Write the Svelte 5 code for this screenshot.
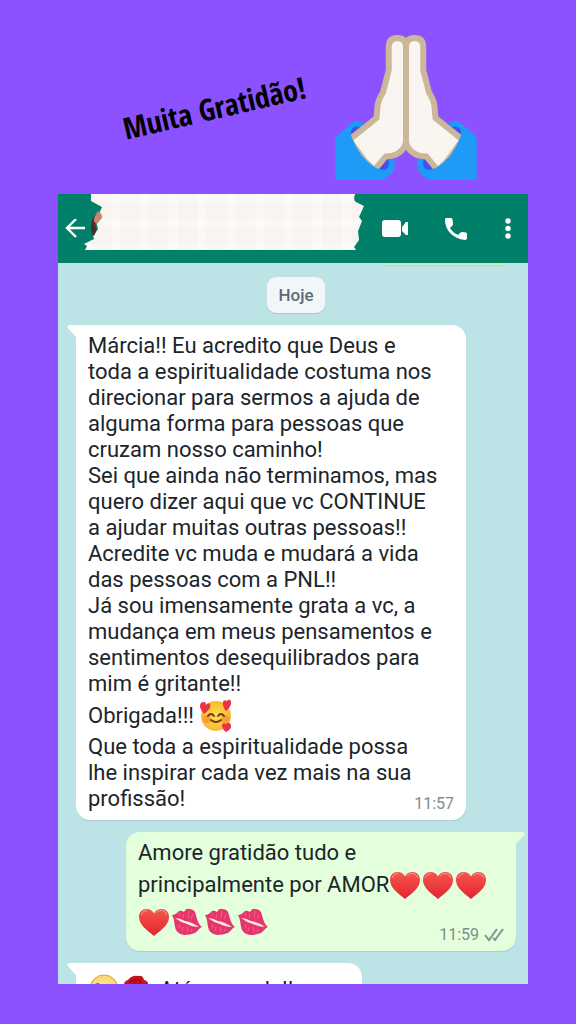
<script>
  const messages = [
    {
      from: "them",
      size: "full",
      time: "11:57",
      parts: [
        {
          text: "Márcia!! Eu acredito que Deus e\ntoda a espiritualidade costuma nos\ndirecionar para sermos a ajuda de\nalguma forma para pessoas que\ncruzam nosso caminho!\nSei que ainda não terminamos, mas\nquero dizer aqui que vc CONTINUE\na ajudar muitas outras pessoas!!\nAcredite vc muda e mudará a vida\ndas pessoas com a PNL!!\nJá sou imensamente grata a vc, a\nmudança em meus pensamentos e\nsentimentos desequilibrados para\nmim é gritante!!\nObrigada!!! ",
        },
        { icon: "loved" },
        {
          text: "\nQue toda a espiritualidade possa\nlhe inspirar cada vez mais na sua\nprofissão!",
        },
      ],
    },
    {
      from: "me",
      size: "full",
      time: "11:59",
      parts: [
        { text: "Amore gratidão tudo e\nprincipalmente por AMOR" },
        { icon: "heart" },
        { icon: "heart" },
        { icon: "heart" },
        { text: "\n" },
        { icon: "heart" },
        { icon: "kiss" },
        { icon: "kiss" },
        { icon: "kiss" },
      ],
    },
    {
      from: "them",
      size: "short",
      parts: [{ icon: "wink" }, { icon: "rose" }, { text: " Até segunda!!" }],
    },
  ];
</script>

{#snippet emoji(name)}
  <svg class="emoji" viewBox="0 0 33 37" aria-hidden="true">
    {#if name === "heart"}
      <path fill="url(#heartFill)" d="M16 33C9 27 1 22 1 14C1 9 4 6 8.500 6C12 6 15 8 16 10.500C17 8 20 6 23.500 6C28 6 31 9 31 14C31 22 23 27 16 33Z" />
      <path fill="none" stroke="#f9a596" stroke-width="1" opacity=".8" d="M3 12Q5 7 9 7.500M18 10Q20 7 24 7.500Q28 8 29 12" />
    {:else if name === "kiss"}
      <path fill="#e5356c" d="M1 12C4 12 6 10 8 8Q10 7 13 9Q15 5 18 6Q22 6 24 9C26 14 26 20 31 24C28 25 27 28 24 30Q19 32 13 32Q7 31 5 27C3 22 4 17 1 12Z" />
      <path fill="#fbe9dc" d="M4 15Q9 15 14 18Q21 19 28 24Q21 24 16 21Q9 19 4 15Z" />
      <path fill="none" stroke="#f2769c" stroke-width="1" opacity=".7" d="M8 10L9 13M13 11L12 15M18 8L17 15M22 11L20 16M8 21L9 25M12 24L11 28M16 24L17 29M21 26L20 29" />
    {:else if name === "loved"}
      <circle cx="17" cy="19" r="15" fill="url(#faceFill)" />
      <circle cx="8" cy="22" r="4" fill="#f78b3c" opacity=".7" />
      <circle cx="26" cy="22" r="4" fill="#f78b3c" opacity=".7" />
      <path fill="none" stroke="#6b3d12" stroke-width="2" stroke-linecap="round" d="M9 19Q12 15 15 19M19 19Q22 15 25 19M12 23Q17 27 22 23" />
      <path fill="#e93448" d="M5 17Q1 12 1 9Q1 5 5 5Q7 5 7 8Q9 5 11 7Q13 11 5 17ZM27 14Q23 9 24 5Q25 2 28 4Q30 1 32 4Q33 9 27 14ZM27 35Q23 32 23 28Q24 25 27 27Q30 24 32 28Q33 32 27 35Z" />
    {:else if name === "wink"}
      <circle cx="16" cy="18" r="14" fill="url(#winkFill)" stroke="#dc9a34" stroke-width="1" />
      <path fill="none" stroke="#6b3d12" stroke-width="2" stroke-linecap="round" d="M7 15Q9 12 12 14M20 18Q22 15 25 18M15 22Q19 23 16 25Q19 26 15 28" />
    {:else if name === "rose"}
      <path fill="none" stroke="#3d8b37" stroke-width="2" d="M16 22Q18 28 15 35" />
      <path fill="#c4141f" d="M3 14Q3 10 7 9Q11 4 17 5Q22 4 23 9Q28 10 27 15Q25 23 17 24Q8 23 3 14Z" />
      <path fill="none" stroke="#7f0812" stroke-width="1" d="M8 11Q14 7 18 9Q22 11 17 14Q12 13 14 10M7 15Q14 20 24 13" />
    {/if}
  </svg>
{/snippet}

<svg class="defs" width="0" height="0" aria-hidden="true">
  <defs>
    <linearGradient id="heartFill" x1="0" y1="0" x2="0" y2="1">
      <stop offset="0" stop-color="#f5564c" />
      <stop offset="1" stop-color="#e3242f" />
    </linearGradient>
    <radialGradient id="faceFill">
      <stop offset="0" stop-color="#ffe14f" />
      <stop offset="1" stop-color="#fbb62f" />
    </radialGradient>
    <radialGradient id="winkFill">
      <stop offset="0" stop-color="#ffeb9a" />
      <stop offset="1" stop-color="#f8d672" />
    </radialGradient>
  </defs>
</svg>

<main class="story">
  <div class="hero">
    <h1>Muita Gratidão!</h1>
    <svg class="hands" viewBox="30 29 426 437" aria-hidden="true">
      <defs>
        <g id="hand">
          <path fill="#4450f4" d="M76 320Q78 302 94 301L117 303L84 346ZM150 432L188 398L198 425L180 442Z" />
          <path fill="#f9f5f0" stroke="#cdb799" stroke-width="18" d="M243 352V66Q243 38 217 38Q191 38 191 66V135L174 201Q157 228 157 248L154 279L72 345L120 410L147 437L182 395Q202 395 215 388Q238 376 243 352Z" />
          <path fill="#1d9bf6" d="M30 338L78 294Q95 281 117 297L103 308Q92 301 82 310Q72 320 80 339Q90 365 108 390Q126 413 153 430Q172 438 184 433Q196 422 189 403L207 402Q213 425 203 443L175 466H30Z" />
        </g>
      </defs>
      <use href="#hand" />
      <use href="#hand" transform="translate(486 0) scale(-1 1)" />
    </svg>
  </div>

  <section class="phone">
    <header>
      <button aria-label="Voltar">
        <svg width="20" height="20" viewBox="0 0 20 20">
          <path fill="none" stroke="#fff" stroke-width="2.400" d="M20 9H2M11 0L2 9L11 18" />
        </svg>
      </button>
      <svg class="paper" viewBox="0 0 282 56" preserveAspectRatio="none" aria-hidden="true">
        <defs>
          <pattern id="check" width="29" height="25" patternUnits="userSpaceOnUse" x="6" y="8">
            <rect width="29" height="25" fill="#fcfbfa" />
            <rect width="20" height="25" fill="#faf8f5" />
            <rect width="29" height="17" fill="#faf8f5" />
            <rect width="20" height="17" fill="#f8f4ef" />
          </pattern>
        </defs>
        <path fill="url(#check)" d="M6 0H271Q269 7 272 8L280 12L275 23L278 27L274 37L275 46L270 53L272 56H0L2 52L-1 50L9 45L8 41L13 35L11 27L17 13L6 7Z" />
        <path fill="#4b3028" d="M15 18Q7 20 6 32Q6 40 9 42L12 36L10 31Z" />
        <path fill="#c28a70" d="M10 22L13 17Q18 20 17 24L12 30Q7 28 10 22Z" />
      </svg>
      <div class="actions">
        <button aria-label="Chamada de vídeo">
          <svg width="26" height="20" viewBox="0 0 26 20">
            <rect x="0" y="1" width="19" height="17" rx="3" fill="#fff" />
            <path fill="#fff" d="M20 8L24 3H26V16H24L20 12Z" />
          </svg>
        </button>
        <button aria-label="Ligar">
          <svg width="24" height="24" viewBox="0 0 24 24">
            <path fill="#fff" d="M2 1H7Q8.500 1 8.600 3L9 7Q9 8 8 9L6 11Q9 16 14 18L16 16Q17 15 18 15L22 15.500Q23 16 23 17V21Q23 23 21 23C9 22 1 13 1 3Q1 1 2 1Z" />
          </svg>
        </button>
        <button aria-label="Mais opções">
          <svg width="8" height="22" viewBox="0 0 8 22" fill="#fff">
            <circle cx="4" cy="3" r="2.700" />
            <circle cx="4" cy="10.500" r="2.700" />
            <circle cx="4" cy="18" r="2.700" />
          </svg>
        </button>
      </div>
    </header>

    <div class="chat">
      <div class="previous"></div>
      <span class="day">Hoje</span>
      {#each messages as message}
        <article class="bubble {message.from} {message.size}">
          <p>{#each message.parts as part}{#if part.icon}{@render emoji(part.icon)}{:else}{part.text}{/if}{/each}</p>
          {#if message.time}
            <footer>
              <time>{message.time}</time>
              {#if message.from === "me"}
                <svg width="20" height="14" viewBox="0 0 20 14" aria-hidden="true">
                  <path fill="none" stroke="#87948f" stroke-width="2" d="M1 7L5 12L13 1M9 10L11 12L19 1" />
                </svg>
              {/if}
            </footer>
          {/if}
        </article>
      {/each}
    </div>
  </section>
</main>

<style>
  :global(body) {
    background: #8c52ff;
  }

  .defs {
    position: absolute;
  }

  .story {
    box-sizing: border-box;
    display: flex;
    flex-direction: column;
    height: 100vh;
    padding: 35px 48px 40px 58px;
    font-family: Roboto, sans-serif;
  }

  /* top banner */

  .hero {
    display: flex;
    align-items: center;
    justify-content: center;
    gap: 28px;
    padding: 0 0 14px 12px;
  }
  h1 {
    margin: 0;
    color: #000;
    font: bold 30px "Liberation Sans Narrow", "Open Sans Condensed", sans-serif;
    white-space: nowrap;
    transform: rotate(-13deg);
  }
  .hands {
    flex: none;
    width: 142px;
    height: 145px;
  }

  /* chat window */

  .phone {
    display: flex;
    flex: 1;
    flex-direction: column;
    min-height: 0;
    overflow: hidden;
    background: #bce3e5;
  }
  header {
    display: flex;
    flex: none;
    align-items: center;
    height: 69px;
    padding: 0 16px 0 7px;
    background: #008069;
  }
  button {
    display: flex;
    padding: 0;
    border: 0;
    background: none;
    cursor: pointer;
  }
  .paper {
    flex: 1;
    align-self: flex-start;
    min-width: 0;
    height: 56px;
    overflow: visible;
  }
  .actions {
    display: flex;
    align-items: center;
    gap: 36px;
    margin-left: 16px;
  }

  .chat {
    display: flex;
    flex: none;
    flex-direction: column;
    gap: 12px;
    padding: 0 12px 0 18px;
  }
  .previous {
    align-self: flex-end;
    width: 125px;
    height: 2px;
    margin-right: 10px;
    border-radius: 0 0 2px 2px;
    background: #cbeabd;
    box-shadow: 0 1px 0 #b8d9d0;
  }
  .day {
    align-self: center;
    padding: 0 11px;
    border-radius: 9px;
    background: #f3f6f9;
    box-shadow: 0 1px 1px rgba(0, 0, 0, 0.1);
    color: #5b6b74;
    font-size: 17px;
    font-weight: 500;
    line-height: 36px;
  }

  .bubble {
    position: relative;
    display: grid;
    box-sizing: border-box;
    max-width: 100%;
    padding: 8px 12px;
    border-radius: 14px;
    box-shadow: 0 1px 1px rgba(0, 0, 0, 0.1);
    color: #1b252b;
  }
  .bubble:before {
    content: "";
    position: absolute;
    top: 0;
    width: 22px;
    height: 14px;
  }
  .full {
    width: 390px;
  }
  .short {
    width: 286px;
  }
  .them {
    background: #fff;
    border-top-left-radius: 0;
  }
  .them:before {
    left: -9px;
    background: #fff;
    clip-path: polygon(0 2px, 2px 0, 100% 0, 100% 100%, 9px 100%, 9px 12px);
  }
  .me {
    align-self: flex-end;
    background: #e4ffdb;
    border-top-right-radius: 0;
  }
  .me:before {
    right: -9px;
    background: #e4ffdb;
    clip-path: polygon(0 0, 20px 0, 100% 2px, 13px 12px, 13px 100%, 0 100%);
  }
  p {
    grid-area: 1 / 1;
    margin: 0;
    font-size: 22px;
    line-height: 26px;
    white-space: pre-line;
  }
  .me p {
    padding-bottom: 3px;
  }
  .emoji {
    display: inline-block;
    width: 33px;
    height: 37px;
    vertical-align: -11px;
  }
  footer {
    display: flex;
    grid-area: 1 / 1;
    align-items: center;
    align-self: end;
    justify-self: end;
    gap: 5px;
    color: #7f8b90;
    font-size: 16px;
    line-height: 16px;
  }
</style>
